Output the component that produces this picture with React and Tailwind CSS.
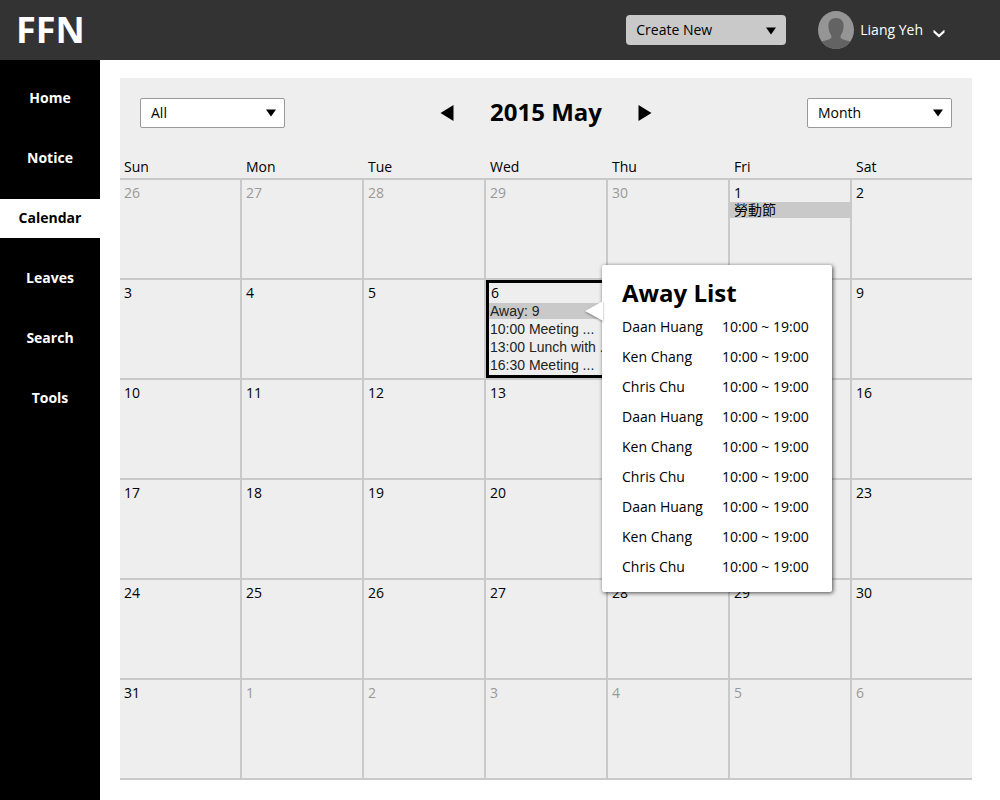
const NAV_ITEMS = ["Home", "Notice", "Calendar", "Leaves", "Search", "Tools"];
const DAYS = ["Sun", "Mon", "Tue", "Wed", "Thu", "Fri", "Sat"];

const FIRST_VISIBLE = new Date(2015, 3, 26);
const WEEKS = Array.from({ length: 6 }, (_, w) =>
  Array.from({ length: 7 }, (_, d) => {
    const date = new Date(2015, 3, FIRST_VISIBLE.getDate() + w * 7 + d);
    return { day: date.getDate(), current: date.getMonth() === 4 };
  })
);

const AWAY = Array.from({ length: 9 }, (_, i) => ({
  name: ["Daan Huang", "Ken Chang", "Chris Chu"][i % 3],
  time: "10:00 ~ 19:00",
}));

const MEETINGS = ["10:00 Meeting ...", "13:00 Lunch with ...", "16:30 Meeting ..."];

function DownTriangle({ className }) {
  return (
    <svg aria-hidden="true" viewBox="0 0 10 8" className={`pointer-events-none absolute h-2 w-2.5 ${className}`}>
      <path d="M0 0.5H10L5 7.5Z" fill="#000" />
    </svg>
  );
}

function FilterSelect({ label, options }) {
  return (
    <label className="relative block w-[145px]">
      <select
        aria-label={label}
        className="block h-[30px] w-full appearance-none rounded-xs border border-[#999] bg-white pr-8 pl-[10px] text-sm text-black"
      >
        {options.map((o) => (
          <option key={o}>{o}</option>
        ))}
      </select>
      <DownTriangle className="top-[11px] right-[9px]" />
    </label>
  );
}

function Header() {
  return (
    <header className="flex h-[60px] items-center bg-[#333] pr-[55px] pl-4 text-white">
      <a href="#home" className="text-4xl font-bold">FFN</a>
      <label className="relative ml-auto block w-40">
        <select
          aria-label="Create new"
          className="block h-[30px] w-full appearance-none rounded-sm bg-[#c9c9c9] pr-8 pl-[10px] text-sm text-black"
        >
          <option>Create New</option>
          <option>Event</option>
          <option>Leave</option>
        </select>
        <DownTriangle className="top-3 right-[10px]" />
      </label>
      <button type="button" className="ml-8 flex items-center text-sm font-medium">
        <svg aria-hidden="true" viewBox="0 0 36 38" className="h-[38px] w-9">
          <defs>
            <clipPath id="avatar-clip">
              <ellipse cx="18" cy="19" rx="18" ry="19" />
            </clipPath>
          </defs>
          <g clipPath="url(#avatar-clip)">
            <rect width="36" height="38" fill="#959595" />
            <path
              d="M18 7C22.8 7 25.8 10 25.6 15C25.4 19 24.4 22 22.8 24.2C22.2 25.8 22.6 27.2 24 28C26.5 29.2 30 29.6 33 30.8V38H3V30.8C6 29.6 9.500 29.2 12 28C13.4 27.2 13.8 25.8 13.2 24.2C11.6 22 10.600 19 10.400 15C10.2 10 13.2 7 18 7Z"
              fill="#636363"
            />
          </g>
        </svg>
        <span className="ml-1.5">Liang Yeh</span>
        <svg aria-hidden="true" viewBox="0 0 12 8" className="mt-2 ml-2.5 h-2 w-3">
          <path d="M0.500 0V2.6L6 7.6L11.5 2.600V0H11L6 4.4L1 0Z" fill="#fff" />
        </svg>
      </button>
    </header>
  );
}

function Sidebar() {
  return (
    <nav aria-label="Main" className="w-[100px] shrink-0 bg-black pt-[19px]">
      <ul className="flex flex-col gap-[21px]">
        {NAV_ITEMS.map((item) => (
          <li key={item}>
            <a
              href={`#${item.toLowerCase()}`}
              aria-current={item === "Calendar" ? "page" : undefined}
              className={`flex h-[39px] items-center justify-center pb-px text-sm font-bold ${
                item === "Calendar" ? "bg-white text-black" : "text-white"
              }`}
            >
              {item}
            </a>
          </li>
        ))}
      </ul>
    </nav>
  );
}

function AwayPopover() {
  return (
    <div
      role="dialog"
      aria-label="Away List"
      className="absolute -top-[18px] left-[113px] z-10 w-[230px] rounded-xs bg-white px-5 pt-3 pb-[10px] text-black shadow-[1px_1px_4px_rgba(0,0,0,0.7)]"
    >
      <svg
        aria-hidden="true"
        viewBox="0 0 18 20"
        className="absolute top-9 -left-[17px] h-5 w-[18px] drop-shadow-[0_1px_1px_rgba(0,0,0,0.4)]"
      >
        <path d="M18 0V20L0 10Z" fill="#fff" />
      </svg>
      <h2 className="mb-1 text-2xl leading-[31px] font-bold">Away List</h2>
      <table className="w-full text-sm">
        <tbody>
          {AWAY.map((a, i) => (
            <tr key={i} className="h-[30px]">
              <td className="w-[100px] whitespace-nowrap">{a.name}</td>
              <td className="whitespace-nowrap">{a.time}</td>
            </tr>
          ))}
        </tbody>
      </table>
    </div>
  );
}

function SelectedDay({ day }) {
  return (
    <div className="relative h-[98px] border-3 border-black">
      <div className="pl-0.5 leading-5">{day}</div>
      <div className="overflow-hidden font-['Liberation_Sans',Arial,sans-serif] whitespace-nowrap text-[#222]">
        <button type="button" className="mb-px block h-4 w-full bg-[#c9c9c9] pl-px text-left leading-4">
          Away: 9
        </button>
        {MEETINGS.map((m) => (
          <div key={m} className="pl-px leading-[18px]">{m}</div>
        ))}
      </div>
      <AwayPopover />
    </div>
  );
}

function DayCell({ day, current, last }) {
  const selected = current && day === 6;
  return (
    <td
      className={`h-[100px] border-b-2 border-[#c9c9c9] p-0 align-top ${last ? "" : "border-r-2"} ${
        current ? "text-black" : "text-[#999]"
      }`}
    >
      {selected ? (
        <SelectedDay day={day} />
      ) : (
        <>
          <div className="pt-1 pl-1 leading-[18px]">{day}</div>
          {current && day === 1 && (
            <div className="h-4 bg-[#c9c9c9] pl-1 leading-4">勞動節</div>
          )}
        </>
      )}
    </td>
  );
}

function Calendar() {
  return (
    <section className="bg-[#eee]">
      <div className="flex items-center justify-between p-5">
        <FilterSelect label="Category" options={["All", "Meetings", "Leaves"]} />
        <div className="flex items-center gap-9">
          <button type="button" aria-label="Previous month">
            <svg aria-hidden="true" viewBox="0 0 14 16" className="h-4 w-3.5">
              <path d="M13.5 0V16L0.5 8Z" fill="#000" />
            </svg>
          </button>
          <h1 className="pb-0.5 text-2xl leading-7 font-bold">2015 May</h1>
          <button type="button" aria-label="Next month">
            <svg aria-hidden="true" viewBox="0 0 14 16" className="h-4 w-3.5">
              <path d="M0.5 0V16L13.5 8Z" fill="#000" />
            </svg>
          </button>
        </div>
        <FilterSelect label="View" options={["Month", "Week", "Day"]} />
      </div>
      <table className="mt-1.5 w-full table-fixed border-separate border-spacing-0 text-sm">
        <thead>
          <tr>
            {DAYS.map((d) => (
              <th
                key={d}
                className={`h-[26px] border-b-2 border-[#c9c9c9] p-0 pt-0.5 pl-1 text-left font-normal ${d === "Sat" ? "w-[120px]" : ""}`}
              >
                {d}
              </th>
            ))}
          </tr>
        </thead>
        <tbody>
          {WEEKS.map((week, w) => (
            <tr key={w}>
              {week.map((cell, d) => (
                <DayCell key={d} {...cell} last={d === 6} />
              ))}
            </tr>
          ))}
        </tbody>
      </table>
    </section>
  );
}

export default function App() {
  return (
    <div className="flex min-h-screen flex-col bg-white font-['Open_Sans','Noto_Sans_CJK_TC',sans-serif] text-black">
      <Header />
      <div className="flex grow">
        <Sidebar />
        <main className="min-w-0 grow pt-[18px] pr-7 pb-5 pl-5">
          <Calendar />
        </main>
      </div>
    </div>
  );
}
